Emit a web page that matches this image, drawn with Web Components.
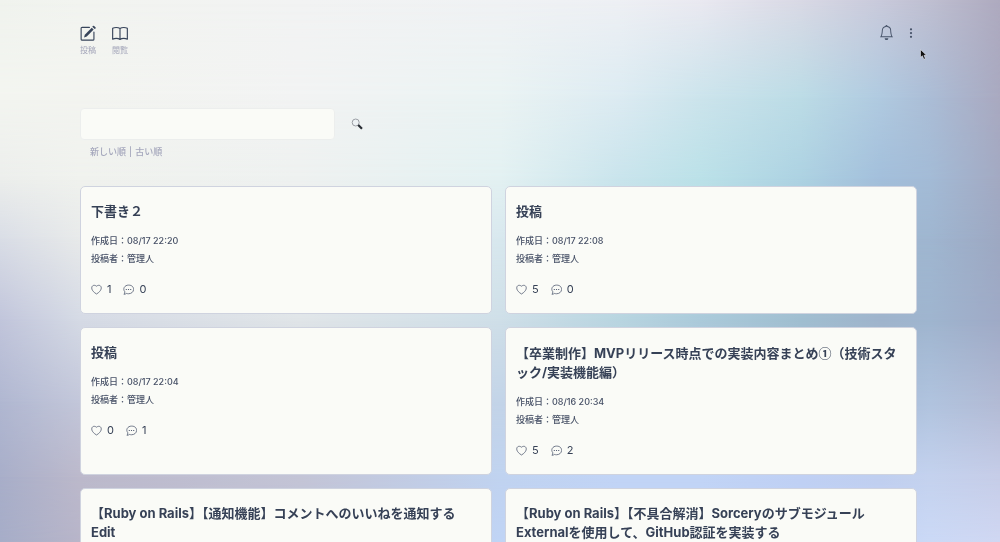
<!DOCTYPE html>
<html lang="ja">
<head>
<meta charset="utf-8">
<meta name="viewport" content="width=device-width, initial-scale=1">
<title>閲覧</title>
<style>
body {
  margin: 0;
  color: #364156;
  font-family: Inter, "Noto Sans CJK JP", sans-serif;
}
.circled { font-family: "Noto Sans CJK JP", sans-serif; }
</style>
</head>
<body>
<board-page>
  <aurora-backdrop slot="backdrop"></aurora-backdrop>
  <board-header slot="header"></board-header>
  <post-search slot="search"></post-search>
  <post-card date="08/17 22:20" author="管理人" likes="1" comments="0">下書き２</post-card>
  <post-card date="08/17 22:08" author="管理人" likes="5" comments="0">投稿</post-card>
  <post-card date="08/17 22:04" author="管理人" likes="0" comments="1">投稿</post-card>
  <post-card date="08/16 20:34" author="管理人" likes="5" comments="2">【卒業制作】MVPリリース時点での実装内容まとめ<span class="circled">①</span>（技術スタック/実装機能編）</post-card>
  <post-card date="08/15 21:10" author="管理人" likes="3" comments="0">【Ruby on Rails】【通知機能】コメントへのいいねを通知する Edit</post-card>
  <post-card date="08/14 20:45" author="管理人" likes="4" comments="1">【Ruby on Rails】【不具合解消】SorceryのサブモジュールExternalを使用して、GitHub認証を実装する</post-card>
</board-page>
<pointer-arrow></pointer-arrow>

<script>
class Base extends HTMLElement {
  constructor() {
    super();
    this.attachShadow({ mode: "open" });
  }
  connectedCallback() {
    this.shadowRoot.innerHTML = this.render();
  }
}

customElements.define("board-page", class extends Base {
  render() {
    return `
<style>
:host {
  display: block;
  position: relative;
  z-index: 0;
  height: 100vh;
  overflow-y: auto;
  scrollbar-width: none;
}
main { padding: 0 calc(8% + 3px) 0 8%; }
.grid {
  display: grid;
  grid-template-columns: 1fr 1fr;
  gap: 13px;
  margin-top: 27px;
  padding-bottom: 40px;
}
</style>
<slot name="backdrop"></slot>
<slot name="header"></slot>
<main>
  <slot name="search"></slot>
  <div class="grid"><slot></slot></div>
</main>`;
  }
});

/* Colour mesh: each row is a horizontal gradient that fades in over the row above it. */
customElements.define("aurora-backdrop", class extends Base {
  render() {
    const columns = [0, 8, 30, 50, 62, 70, 80, 88, 93, 100];
    const rows = [
      [0, "f0f3ee f2f4f0 f2f3f3 f0f2f4 eef0f4 eae9f1 d9d9e5 c9cadb bfbfd1 aeaabf"],
      [18, "f3f5f0 f3f4f0 f2f3f3 eaf3f3 dcebf2 cce4ec bcdce6 b0cae0 abbdd6 a9a9c0"],
      [33, "eceeec f0f2ee eef1f0 e3f1f2 c9e4ec bbe1e8 add2e2 a3bfdb a3bbd6 a3a9c2"],
      [44, "d9dde6 e8eaea eceeee d8e8ee c0dfe8 b4dbe4 a8cbdd 9fb8d0 9fb6d0 9da8c2"],
      [59, "c1c5db d5dae5 e0e5e8 cfdfe8 b8d5e0 abcada a0bed0 9fb4cc 9fb5cf 9faac6"],
      [74, "b0b7d1 c3c7da ccd0de c3d4e8 bccfe8 b5c9e3 aec3de a8bdd8 b0c3de b2bad4"],
      [88, "a8aec9 bcb9cb c3c4d6 c0d3f0 c1d4f6 c1d4f6 bfd0f4 c0cff0 c4d2ee c6cde8"],
      [100, "a6adc8 b8b5c9 c2c6da c0d4f5 c3d5f8 c3d5f8 c3d5f8 c5d5f5 cbd9f6 d0d7f2"]
    ];
    const layers = rows.map(([y, colours], i) => {
      const stops = colours.split(" ").map((c, k) => `#${c} ${columns[k]}%`).join(", ");
      const mask = i ? `; mask-image: linear-gradient(transparent ${rows[i - 1][0]}%, #000 ${y}%)` : "";
      return `<div style="background: linear-gradient(90deg, ${stops})${mask}"></div>`;
    }).join("");
    return `
<style>
:host { position: fixed; inset: 0; z-index: -1; display: grid; }
div { grid-area: 1 / 1; }
</style>${layers}`;
  }
});

customElements.define("board-header", class extends Base {
  render() {
    return `
<style>
:host { display: block; }
header {
  display: flex;
  justify-content: space-between;
  align-items: flex-start;
  padding: 25px calc(8% + 3px) 0 8%;
}
nav { display: flex; gap: 16px; }
nav a {
  display: flex;
  flex-direction: column;
  align-items: center;
  gap: 2px;
  font-size: 8px;
  line-height: 12px;
  color: #a3a5b9;
  text-decoration: none;
}
nav svg { display: block; width: 16px; height: 17px; color: #37445a; }
.tools { display: flex; align-items: center; gap: 11px; }
button {
  display: block;
  padding: 0;
  border: 0;
  background: none;
  color: #475369;
}
button svg { display: block; width: 15px; height: 15px; }
.menu svg { width: 12px; height: 12px; }
</style>
<header>
  <nav>
    <a href="#new">
      <svg viewBox="0 0 17 17" fill="none" stroke="currentColor" stroke-width="1.2" stroke-linecap="round" stroke-linejoin="round"><path d="M10 2H2.300Q1.200 2 1.200 3.100V14.500Q1.200 15.600 2.300 15.600H13.700Q14.800 15.600 14.800 14.500V7"/><path d="M4.300 12.800 5.100 9.700 12.500 2.300 14.500 4.300 7.200 11.800Z" fill="currentColor" stroke="none"/><path d="M14.300 1.200 15.700 2.600" stroke-width="2"/></svg>
      投稿
    </a>
    <a href="#read">
      <svg viewBox="0 0 17 17" fill="none" stroke="currentColor" stroke-width="1.200" stroke-linejoin="round"><path d="M8.500 3.200Q7 2.100 4.500 2.100 2.300 2.100.7 3V14.500Q2.500 13.700 4.500 13.700 7 13.700 8.500 14.900 10 13.700 12.500 13.700 14.500 13.700 16.300 14.500V3Q14.700 2.100 12.500 2.100 10 2.100 8.500 3.200ZM8.500 3.200V14.900"/></svg>
      閲覧
    </a>
  </nav>
  <div class="tools">
    <button type="button" aria-label="通知">
      <svg viewBox="0 0 16 16" fill="currentColor"><path d="M8 16a2 2 0 0 0 2-2H6a2 2 0 0 0 2 2zM8 1.918l-.797.161A4.002 4.002 0 0 0 4 6c0 .628-.134 2.197-.459 3.742-.160.767-.376 1.566-.663 2.258h10.244c-.287-.692-.502-1.490-.663-2.258C12.134 8.197 12 6.628 12 6a4.002 4.002 0 0 0-3.203-3.920L8 1.917zM14.220 12c.223.447.481.801.780 1H1c.299-.199.557-.553.780-1C2.680 10.200 3 6.880 3 6c0-2.420 1.720-4.440 4.005-4.901a1 1 0 1 1 1.990 0A5.002 5.002 0 0 1 13 6c0 .880.320 4.200 1.220 6z"/></svg>
    </button>
    <button type="button" class="menu" aria-label="メニュー">
      <svg viewBox="0 0 16 16" fill="currentColor"><path d="M9.500 13a1.500 1.500 0 1 1-3 0 1.500 1.500 0 0 1 3 0zm0-5a1.500 1.500 0 1 1-3 0 1.500 1.500 0 0 1 3 0zm0-5a1.500 1.500 0 1 1-3 0 1.500 1.500 0 0 1 3 0z"/></svg>
    </button>
  </div>
</header>`;
  }
});

customElements.define("post-search", class extends Base {
  render() {
    return `
<style>
:host { display: block; padding-top: 52px; }
form { display: flex; align-items: center; gap: 16px; margin: 0; }
input {
  box-sizing: border-box;
  width: 30%;
  min-width: 255px;
  height: 32px;
  padding: 0 10px;
  border: 1px solid #eceeed;
  border-radius: 4px;
  background: #fafbf7;
  font: inherit;
  font-size: 12px;
  color: inherit;
}
button { padding: 0; border: 0; background: none; }
button svg { display: block; width: 12px; height: 12px; }
.sort {
  display: flex;
  gap: 3px;
  padding: 4px 10px 0;
  font-size: 9px;
  line-height: 15px;
  font-weight: 500;
  color: #a5a7bc;
}
.sort a { color: inherit; text-decoration: none; }
</style>
<form>
  <input type="text" aria-label="検索">
  <button type="button" aria-label="検索する">
    <svg viewBox="0 0 12 12" fill="none"><circle cx="4.700" cy="4.500" r="3.500" fill="#edf2f4" stroke="#9a9ea4"/><path d="M7.200 7 11 10.800" stroke="#272c33" stroke-width="2.200"/></svg>
  </button>
</form>
<div class="sort"><a href="#newest">新しい順</a><span>|</span><a href="#oldest">古い順</a></div>`;
  }
});

customElements.define("post-card", class extends Base {
  render() {
    return `
<style>
:host {
  display: block;
  box-sizing: border-box;
  padding: 15px 12px 16px 10px;
  border: 1px solid #cfd3df;
  border-radius: 5px;
  background: #fafbf7;
}
h2 {
  margin: 0 0 11px;
  font-size: 13px;
  line-height: 19px;
  font-weight: 700;
}
p { margin: 0; font-size: 9px; line-height: 18px; font-weight: 500; color: #465066; }
.stats {
  display: flex;
  gap: 12px;
  margin-top: 13px;
  font-size: 11px;
  line-height: 16px;
}
.stats span { display: flex; align-items: center; gap: 5px; }
svg { display: block; width: 11px; height: 11px; color: #566075; }
</style>
<h2><slot></slot></h2>
<p>作成日：${this.getAttribute("date")}</p>
<p>投稿者：${this.getAttribute("author")}</p>
<div class="stats">
  <span><svg viewBox="0 0 16 16" fill="none" stroke="currentColor" stroke-width="1.200"><path d="M8 14.500C-4 7.500 2-1.500 8 3.200 14-1.500 20 7.500 8 14.500Z"/></svg>${this.getAttribute("likes")}</span>
  <span><svg viewBox="0 0 16 16" fill="none" stroke="currentColor" stroke-width="1.200" stroke-linejoin="round"><path d="M2.700 11.300C-1 7 2.500 1.600 8 1.600S15.400 4.700 15.400 8 12.200 14.200 8 14.200Q6.500 14.200 5.300 13.700 3.500 14.800 1.400 15 2.700 13.300 2.700 11.300Z"/><path d="M4 8h1.600M7.200 8h1.600M10.400 8H12" stroke-width="1.600"/></svg>${this.getAttribute("comments")}</span>
</div>`;
  }
});

customElements.define("pointer-arrow", class extends Base {
  render() {
    return `
<style>
:host { position: absolute; left: 92%; top: 49px; width: 7px; height: 11px; pointer-events: none; }
svg { display: block; width: 7px; height: 11px; }
</style>
<svg viewBox="0 0 7 11" aria-hidden="true"><path d="M.5.500V8.500L2.400 6.800 3.800 10.300 5.400 9.600 4 6.300H6.500Z" fill="#111" stroke="#e8eaf2" stroke-width=".6"/></svg>`;
  }
});
</script>
</body>
</html>
